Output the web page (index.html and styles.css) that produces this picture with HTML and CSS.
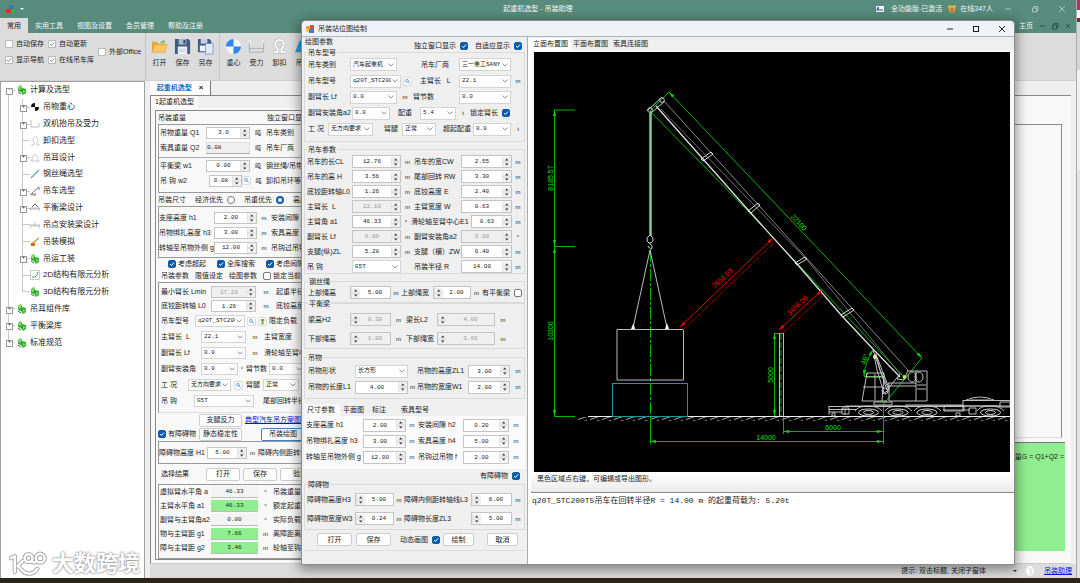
FILE: index.html
```html
<!DOCTYPE html>
<html lang="zh-CN">
<head>
<meta charset="utf-8">
<title>起重机选型 - 吊装助理</title>
<link rel="stylesheet" href="styles.css">
</head>
<body>
<svg class="defs" width="0" height="0" aria-hidden="true">
  <symbol id="leaf" viewBox="0 0 10 10"><path d="M1 2L4 0L5 3L9 4L9 8L6 10L4 7L1 6Z" fill="#2fae2f"/><path d="M1 2L4 1L4 4L2 5Z" fill="#7fe06a"/><path d="M6 5L9 6L6 9Z" fill="#5fe04e"/><path d="M1 7L4 9" stroke="#555"/></symbol>
  <symbol id="search" viewBox="0 0 8 8"><circle cx="3.4" cy="3.2" r="1.7" fill="#dcebff" stroke="#5b8fdc" stroke-width=".8"/><path d="M4.6 4.6L6.6 6.4" stroke="#5b8fdc"/></symbol>
</svg>
<div class="screen">
  <div class="app">
    <header class="titlebar">
      <svg class="logo" viewBox="0 0 10 10"><rect x="3" y="1" width="4" height="4" fill="#3d6fd0"/><rect x="0" y="5" width="5" height="4" fill="#d8322c"/><rect x="5" y="5" width="4" height="4" fill="#35b03c"/></svg>
      <svg class="caret" viewBox="0 0 4 4"><path d="M0 1H4L2 3Z" fill="#fff"/></svg>
      <h1>起重机选型 - 吊装助理</h1>
      <div class="account">
        <svg class="ico8" viewBox="0 0 8 8"><rect y="1" width="8" height="6" fill="#f3f6ff"/><path d="M1 6V4H3V6M4 5H7" stroke="#2d4f9c" fill="none"/><circle cx="2" cy="3" r="1" fill="#2d4f9c"/></svg>
        <span class="lic">全功能版-已激活</span>
        <svg class="ico8" viewBox="0 0 8 8"><circle cx="4" cy="4" r="3.4" fill="#e5a13b"/><circle cx="1.5" cy="1.5" r="1.3" fill="#d8ce4c"/><circle cx="6.5" cy="1.5" r="1.3" fill="#d8ce4c"/><path d="M2.5 5.5H5.5M3 3V4M5 3V4" stroke="#8a2c18" stroke-width=".8"/></svg>
        <span>在线347人</span>
      </div>
      <div class="winbtns">
        <button aria-label="最小化"><svg viewBox="0 0 8 8"><path d="M1 4H7"/></svg></button>
        <button aria-label="还原"><svg viewBox="0 0 8 8"><path d="M1.5 3H5.5V7H1.5ZM3 3V1.500H7V5.500H5.500"/></svg></button>
        <button aria-label="关闭"><svg viewBox="0 0 8 8"><path d="M1 1L7 7M7 1L1 7"/></svg></button>
      </div>
    </header>
    <nav class="menu">
      <button class="on">常用</button><button>实用工具</button><button>视图及设置</button><button>会员管理</button><button>帮助及注册</button>
      <div class="mdi"><span>主页</span>
        <svg viewBox="0 0 8 8"><path d="M2 4H7"/></svg><svg viewBox="0 0 8 8"><path d="M1.500 3H5.500V7H1.500ZM3 3V1.500H7V5.500H5.500"/></svg><svg viewBox="0 0 8 8"><path d="M2 2L6 6M6 2L2 6"/></svg></div>
    </nav>
    <section class="ribbon">
      <div class="opts">
        <label><input type="checkbox" class="sq">自动保存</label><label><input type="checkbox" class="sq" checked>自动更新</label>
        <label class="tall"><input type="checkbox" class="sq">外部Office</label>
        <label><input type="checkbox" class="sq" checked>显示导航</label><label><input type="checkbox" class="sq" checked>在线吊车库</label>
      </div>
      <div class="tools sep">
        <button><svg viewBox="0 0 18 18"><path d="M1 15V4H6L8 6H15V9" fill="#e9a63a"/><path d="M9 5L13 2L15 3L14 6" fill="#8bc06a"/><path d="M1 15L4 7H17L15 15Z" fill="#fbc864" stroke="#d99a34" stroke-width=".6"/></svg>打开</button>
        <button><svg viewBox="0 0 18 18"><path d="M1 1H15L17 3V17H1Z" fill="#44597e"/><rect x="5" y="1" width="8" height="6" fill="#a9b9d2"/><rect x="10" y="2" width="2" height="4" fill="#32425f"/><rect x="4" y="9" width="10" height="8" fill="#eef2f7"/><path d="M5 12H13M5 14H13" stroke="#9aa9be" stroke-width=".6"/></svg>保存</button>
        <button><svg viewBox="0 0 18 18"><path d="M1 1H13L15 3V15H1Z" fill="#44597e"/><rect x="4" y="1" width="7" height="5" fill="#c4d0e2"/><rect x="3" y="8" width="8" height="6" fill="#eef2f7"/><rect x="9" y="6" width="8" height="11" fill="#dfe8f4" stroke="#6b86b3" stroke-width=".7"/></svg>另存</button>
      </div>
      <div class="tools sep">
        <button><svg viewBox="0 0 18 18"><circle cx="9" cy="9" r="8" fill="#f4f7fb"/><path d="M9 9V17A8 8 0 0 0 17 9ZM9 9V1A8 8 0 0 0 1 9Z" fill="#2f86e8"/></svg>重心</button>
        <button><svg viewBox="0 0 18 18"><path d="M2 2V9M16 2V9" stroke="#fff"/><path d="M1.500 5V15H16.500V5M1 11H17" fill="none" stroke="#a5adb3"/></svg>受力</button>
        <button><svg viewBox="0 0 18 18"><path d="M3 15H7V11C3 8 4 2 9 2S15 8 11 11V15H15" fill="none" stroke="#a9adb0" stroke-width="3"/><path d="M3 15H7V11C3 8 4 2 9 2S15 8 11 11V15H15" fill="none" stroke="#fff" stroke-width="2"/></svg>卸扣</button>
        <button><svg viewBox="0 0 18 18"><path d="M1 15L6 3H13L17 15Z" fill="#2a9fe0"/><circle cx="10" cy="7" r="2.500" fill="#fff"/></svg>吊耳</button>
      </div>
    </section>
    <div class="work">
      <aside class="nav">
        <ul class="tree">
          <li class="t1 open"><svg class="ti"><use href="#leaf"/></svg>计算及选型</li>
          <li class="t2 plus"><svg class="ti" viewBox="0 0 10 10"><circle cx="5" cy="5" r="4.200" fill="#fff" stroke="#ddd" stroke-width=".4"/><path d="M5 5V1A4 4 0 0 0 1 5ZM5 5V9A4 4 0 0 0 9 5Z" fill="#111"/></svg>吊物重心</li>
          <li class="t2 plus"><svg class="ti" viewBox="0 0 10 10"><path d="M1 1V8H9V4" fill="none" stroke="#aaa" stroke-width=".8"/></svg>双机抬吊及受力</li>
          <li class="t2"><svg class="ti" viewBox="0 0 10 10"><path d="M1 9H4V6C2 4 3 1 5.500 1S9 4 7 6V9H10" fill="none" stroke="#bbb" stroke-width=".8"/></svg>卸扣选型</li>
          <li class="t2 plus"><svg class="ti" viewBox="0 0 10 10"><path d="M0 8H10M2 8C2 4 3 2 5 2S8 4 8 8" fill="none" stroke="#bbb" stroke-width=".8"/></svg>吊耳设计</li>
          <li class="t2"><svg class="ti" viewBox="0 0 10 10"><path d="M1 9L9 1" stroke="#6fae9d" stroke-width="1.400"/></svg>钢丝绳选型</li>
          <li class="t2 plus"><svg class="ti" viewBox="0 0 10 10"><path d="M0 8H6M2 7L9 1L9 4" fill="none" stroke="#777"/><path d="M1 9H6" stroke="#b55" stroke-width=".8"/></svg>吊车选型</li>
          <li class="t2 plus"><svg class="ti" viewBox="0 0 10 10"><path d="M2 4L5 1L8 4" fill="none" stroke="#333" stroke-width=".8"/><path d="M0 8V5H10V8M0 6H10" fill="none" stroke="#99a" stroke-width=".7"/></svg>平衡梁设计</li>
          <li class="t2"><svg class="ti" viewBox="0 0 10 10"><path d="M0 9V5H10V9M5 5V2M0 6H10" fill="none" stroke="#aaa" stroke-width=".7"/></svg>吊点安装梁设计</li>
          <li class="t2"><svg class="ti" viewBox="0 0 10 10"><path d="M1 8L4 5L9 1" fill="none" stroke="#e0962e" stroke-width="1.500"/><path d="M1 6H5V9H1Z" fill="#cf6f1e"/></svg>吊装模拟</li>
          <li class="t2 plus"><svg class="ti"><use href="#leaf"/></svg>吊运工装</li>
          <li class="t2"><svg class="ti" viewBox="0 0 10 10"><rect x=".5" y=".5" width="9" height="9" fill="#fff" stroke="#aaa" stroke-width=".6"/><path d="M2 7C5 8 7 6 8 2" fill="none" stroke="#3c9c4b"/></svg>2D结构有限元分析</li>
          <li class="t2 last"><svg class="ti"><use href="#leaf"/></svg>3D结构有限元分析</li>
          <li class="t1 plus"><svg class="ti"><use href="#leaf"/></svg>吊耳组件库</li>
          <li class="t1 plus"><svg class="ti"><use href="#leaf"/></svg>平衡梁库</li>
          <li class="t1 plus last"><svg class="ti"><use href="#leaf"/></svg>标准规范</li>
        </ul>
        <div class="mark">
          <svg viewBox="0 0 40 26"><g id="sign" fill="none" stroke="#a8a8a8" stroke-width="4.500" stroke-linecap="round" stroke-linejoin="round"><path d="M2 7L6 5V21M14 10L9 15L14 20C19 25 26 23 29 18"/><circle cx="20" cy="7" r="4"/><circle cx="32" cy="7" r="4.500"/><path d="M23 10Q26 13 28 10"/></g><g fill="none" stroke="#fff" stroke-width="2.500" stroke-linecap="round" stroke-linejoin="round"><path d="M2 7L6 5V21M14 10L9 15L14 20C19 25 26 23 29 18"/><circle cx="20" cy="7" r="4"/><circle cx="32" cy="7" r="4.500"/><path d="M23 10Q26 13 28 10"/></g></svg>
          <span>大数跨境</span>
        </div>
      </aside>
      <main class="doc">
        <div class="doctabs"><button>起重机选型 <b>×</b></button></div>
        <div class="page">
          <div class="side">
            <div class="subtab"><span>1起重机选型</span></div>
            <div class="frame">
              <div class="head"><span>吊装重量</span><span class="own">独立窗口显示</span></div>
              <div class="box wt">
                <div class="r ra"><label for="q1">吊物重量 Q1</label><input id="q1" class="num" value="3.0"><i>吨</i><span>吊车类别</span></div>
                <div class="r ra"><label for="q2">索具重量 Q2</label><input id="q2" class="flat" value="0.08" readonly><i>吨</i><span>吊车厂商</span></div>
                <div class="r ra line"><label for="w1">平衡梁 w1</label><input id="w1" class="num" value="0.00"><i>吨</i><span>钢丝绳/吊带</span></div>
                <div class="r rb"><label for="w2">吊 钩 w2</label><input id="w2" class="num" value="0.08"><button class="mini" aria-label="查询"><svg><use href="#search"/></svg></button><i>吨</i><span>卸扣吊环等</span></div>
              </div>
              <div class="head radios"><span>吊装尺寸</span><label>经济优先 <input type="radio" name="pri"></label><label>吊重优先 <input type="radio" name="pri" checked></label><span>高度优先</span></div>
              <div class="box dims">
                <div class="r rc"><label for="h1">支座高度 h1</label><input id="h1" class="num" value="2.00"><i>m</i><span>安装间隙</span></div>
                <div class="r rc"><label for="h3">吊物绑扎高度 h3</label><input id="h3" class="num" value="3.00"><i>m</i><span>索具高度</span></div>
                <div class="r rc"><label for="g">转轴至吊物外侧 g</label><input id="g" class="num" value="12.00"><i>m</i><span>吊钩过吊物</span></div>
              </div>
              <div class="checks"><label><input type="checkbox" checked>考虑超起</label><label><input type="checkbox" checked>全库搜索</label><label><input type="checkbox" checked>考虑间隙</label></div>
              <div class="ptabs"><button class="on">吊装参数</button><button>限值设定</button><button>绘图参数</button><label><input type="checkbox">锁定当前</label></div>
              <div class="box prm">
                <div class="r rd low"><label for="lm">最小臂长 Lmin</label><input id="lm" class="num" value="17.28" disabled><i>m</i><span>起重半径</span></div>
                <div class="r rd low"><label for="l0">底铰距转轴 L0</label><input id="l0" class="num" value="1.26"><i>m</i><span>底铰高度</span></div>
                <div class="r re"><label for="md">吊车型号</label><select id="md"><option>q20T_STC200T5</option></select><button class="mini" aria-label="查询型号"><svg><use href="#search"/></svg></button><button class="mini" aria-label="型号图"><svg viewBox="0 0 8 8"><path d="M2 1H6V4H5V6H6V7H2V6H3V4H2Z" fill="#7cb342"/></svg></button><span>限定负载</span></div>
                <div class="r rf"><label for="ml">主臂长&nbsp; L</label><select id="ml"><option>22.1</option></select><i>m</i><span>主臂宽度</span></div>
                <div class="r rf"><label for="fl">副臂长 Lf</label><select id="fl"><option>0.0</option></select><i>m</i><span>滑轮轴至臂中</span></div>
                <div class="r rg"><label for="fa">副臂安装角</label><select id="fa"><option>0.0</option></select><i>°</i><label for="js">臂节数</label><select id="js"><option>0.0</option></select></div>
                <div class="r rh"><label for="gk">工 况</label><select id="gk"><option>无方向要求</option></select><button class="mini" aria-label="查询工况"><svg><use href="#search"/></svg></button><label for="bt">臂腿</label><select id="bt"><option>正常</option></select></div>
                <div class="r ri"><label for="dg">吊 钩</label><select id="dg"><option>G5T</option></select><span>尾部回转半径</span></div>
              </div>
              <div class="acts"><span></span><button class="btn">支腿反力</button><a href="#plan">典型汽车吊方案图</a></div>
              <div class="acts"><label><input type="checkbox" checked>有障碍物</label><button class="btn">静态稳定性</button><button class="btn focus">吊装绘图</button></div>
              <div class="box obs"><div class="r rj"><label for="oh">障碍物高度 H1</label><input id="oh" class="num" value="5.00"><i>m</i><span>障碍内侧距转轴</span></div></div>
              <div class="acts res"><span>选择结果</span><button class="btn">打开</button><button class="btn">保存</button><button class="btn">验算</button></div>
              <div class="box out">
                <div class="r rk"><span>虚拟臂水平角 a</span><output>46.33</output><i>°</i><span>吊装重量</span></div>
                <div class="r rk"><span>主臂水平角 a1</span><output class="ok">46.33</output><i>°</i><span>额定起重</span></div>
                <div class="r rk"><span>副臂与主臂角a2</span><output>0.00</output><i>°</i><span>实际负载率</span></div>
                <div class="r rk"><span>物与主臂距 g1</span><output class="ok">7.66</output><i>m</i><span>离障距离</span></div>
                <div class="r rk"><span>障与主臂距 g2</span><output class="ok">3.46</output><i>m</i><span>轮轴至钩</span></div>
              </div>
            </div>
          </div>
          <div class="results"><div class="empty"></div><div class="calc">吊装重量G = Q1+Q2 =</div></div>
        </div>
        <footer class="status"><span>提示: 双击标题, 关闭子窗体</span><svg class="caret" viewBox="0 0 4 4"><path d="M0 1H4L2 3Z" fill="#222"/></svg><svg class="bulb" viewBox="0 0 10 10"><ellipse cx="5" cy="5" rx="4" ry="5" fill="#fafafa"/><path d="M5 2Q8 5 5 9" fill="none" stroke="#ccc"/></svg><a href="#help">吊装助理</a></footer>
      </main>
    </div>
  </div>
  <div class="sliver"></div>
  <div class="taskbar"></div>

  <section class="dialog" role="dialog" aria-label="吊装站位图绘制">
    <header class="dlgbar"><svg class="ico8" viewBox="0 0 8 8"><rect x="0" y="1" width="5" height="4" fill="#e9a23b"/><rect x="4" y="0" width="4" height="4" fill="#d9533a"/><rect x="3" y="4" width="5" height="4" fill="#4a78d0"/><rect x="0" y="4" width="3" height="3" fill="#f1cc50"/></svg><h2>吊装站位图绘制</h2>
      <div class="winbtns dark">
        <button aria-label="最小化"><svg viewBox="0 0 8 8"><path d="M1 4H7"/></svg></button><button aria-label="最大化"><svg viewBox="0 0 8 8"><rect x="1.500" y="1.500" width="5" height="5"/></svg></button><button aria-label="关闭"><svg viewBox="0 0 8 8"><path d="M1 1L7 7M7 1L1 7"/></svg></button>
      </div>
    </header>
    <div class="dlgbody">
      <form class="params">
        <div class="top"><span>绘图参数</span><label>独立窗口显示 <input type="checkbox" checked></label><label>自适应显示 <input type="checkbox" checked></label></div>
        <fieldset class="g1"><legend>吊车型号</legend>
          <div class="r da"><label for="a1">吊车类别</label><select id="a1"><option>汽车起重机</option></select><label for="a2">吊车厂商</label><select id="a2"><option>三一重工SANY</option></select></div>
          <div class="r db"><label for="a3">吊车型号</label><select id="a3"><option>q20T_STC200T5</option></select><button type="button" class="mini" aria-label="查询"><svg><use href="#search"/></svg></button><label for="a4">主臂长&nbsp;&nbsp; L</label><select id="a4"><option>22.1</option></select><i>m</i></div>
          <div class="r dc"><label for="a5">副臂长 Lf</label><select id="a5"><option>0.0</option></select><i>m</i><label for="a6">臂节数</label><select id="a6"><option>0.0</option></select></div>
          <div class="r dd"><label for="a7">副臂安装角a2</label><select id="a7"><option>0.0</option></select><label for="a8">配重</label><select id="a8"><option>5.4</option></select><i>t</i><label>锁定臂长 <input type="checkbox" checked></label></div>
          <div class="r de"><label for="a9">工 况</label><select id="a9"><option>无方向要求</option></select><label for="a10">臂腿</label><select id="a10"><option>正常</option></select><label for="a11">超起配重</label><select id="a11"><option>0.0</option></select><i>t</i></div>
        </fieldset>
        <fieldset class="g2"><legend>吊车参数</legend>
          <div class="r df"><label for="b1">吊车的长CL</label><input id="b1" class="num" value="12.76"><i>m</i><label for="b2">吊车的宽CW</label><input id="b2" class="num" value="2.55"><i>m</i></div>
          <div class="r df"><label for="b3">吊车的高 H</label><input id="b3" class="num" value="3.56"><i>m</i><label for="b4">尾部回转 RW</label><input id="b4" class="num" value="3.30"><i>m</i></div>
          <div class="r df"><label for="b5">底铰距转轴L0</label><input id="b5" class="num" value="1.26"><i>m</i><label for="b6">底铰高度 E</label><input id="b6" class="num" value="2.40"><i>m</i></div>
          <div class="r df"><label for="b7">主臂长&nbsp; L</label><input id="b7" class="num" value="22.10" disabled><i>m</i><label for="b8">主臂宽度 W</label><input id="b8" class="num" value="0.63"><i>m</i></div>
          <div class="r df e1"><label for="b9">主臂角 a1</label><input id="b9" class="num" value="46.33"><i>°</i><label for="b10">滑轮轴至臂中心E1</label><input id="b10" class="num" value="0.63"><i>m</i></div>
          <div class="r df"><label for="b11">副臂长 Lf</label><input id="b11" class="num" value="0.00" disabled><i>m</i><label for="b12">副臂安装角a2</label><input id="b12" class="num" value="0.00" disabled><i>°</i></div>
          <div class="r df"><label for="b13">支腿(纵)ZL</label><input id="b13" class="num" value="5.28"><i>m</i><label for="b14">支腿（横）ZW</label><input id="b14" class="num" value="6.40"><i>m</i></div>
          <div class="r df"><label for="b15">吊 钩</label><select id="b15"><option>G5T</option></select><i></i><label for="b16">吊装半径 R</label><input id="b16" class="num" value="14.00"><i>m</i></div>
        </fieldset>
        <fieldset class="g3"><legend>钢丝绳</legend>
          <div class="r dg"><label for="c1">上部绳高</label><input id="c1" class="num left" value="5.00"><i>m</i><label for="c2">上部绳宽</label><input id="c2" class="num left" value="2.00"><i>m</i><label>有平衡梁 <input type="checkbox"></label></div>
        </fieldset>
        <fieldset class="g4"><legend>平衡梁</legend>
          <div class="r dh"><label for="c3">梁高H2</label><input id="c3" class="num left" value="0.30" disabled><i>m</i><label for="c4">梁长L2</label><input id="c4" class="num left" value="4.00" disabled><i>m</i></div>
          <div class="r dh"><label for="c5">下部绳高</label><input id="c5" class="num left" value="1.00" disabled><i>m</i><label for="c6">下部绳宽</label><input id="c6" class="num left" value="3.60" disabled><i>m</i></div>
        </fieldset>
        <fieldset class="g5"><legend>吊物</legend>
          <div class="r di"><label for="d1">吊物形状</label><select id="d1"><option>长方形</option></select><i></i><label for="d2">吊物的高度ZL1</label><input id="d2" class="num" value="3.00"><i>m</i></div>
          <div class="r di"><label for="d3">吊物的长度L1</label><input id="d3" class="num" value="4.00"><i>m</i><label for="d4">吊物的宽度W1</label><input id="d4" class="num" value="2.00"><i>m</i></div>
        </fieldset>
        <div class="dtabs"><button type="button" class="on">尺寸参数</button><button type="button">平面图</button><button type="button">标注</button><button type="button">索具型号</button></div>
        <div class="dpane">
          <div class="r dj"><label for="e1">支座高度 h1</label><input id="e1" class="num" value="2.00"><i>m</i><label for="e2">安装间隙 h2</label><input id="e2" class="num" value="0.20"><i>m</i></div>
          <div class="r dj"><label for="e3">吊物绑扎高度 h3</label><input id="e3" class="num" value="3.00"><i>m</i><label for="e4">索具高度 h4</label><input id="e4" class="num" value="5.00"><i>m</i></div>
          <div class="r dj"><label for="e5">转轴至吊物外侧 g</label><input id="e5" class="num" value="12.00"><i>m</i><label for="e6">吊钩过吊物 f</label><input id="e6" class="num" value="2.00"><i>m</i></div>
        </div>
        <div class="has"><label>有障碍物 <input type="checkbox" checked></label></div>
        <fieldset class="g6"><legend>障碍物</legend>
          <div class="r dk"><label for="f1">障碍物高度H3</label><input id="f1" class="num left" value="5.00"><i>m</i><label for="f2">障碍内侧距转轴线L3</label><input id="f2" class="num left" value="6.00"><i>m</i></div>
          <div class="r dk"><label for="f3">障碍物宽度W3</label><input id="f3" class="num left" value="0.24"><i>m</i><label for="f4">障碍物长度ZL3</label><input id="f4" class="num left" value="5.00"><i>m</i></div>
        </fieldset>
        <div class="foot"><button type="button" class="btn">打开</button><button type="button" class="btn">保存</button><label>动态画图 <input type="checkbox" checked></label><button type="button" class="btn">绘制</button><button type="button" class="btn">取消</button></div>
      </form>
      <div class="view">
        <div class="vtabs"><button class="on">立面布置图</button><button>平面布置图</button><button>索具连接图</button></div>
        <svg class="cad" viewBox="534 52 476 420" preserveAspectRatio="xMidYMid slice">
          <defs>
            <marker id="ga" viewBox="0 0 6 4" refX="6" refY="2" markerWidth="6" markerHeight="4" orient="auto-start-reverse" markerUnits="userSpaceOnUse"><path d="M0 .5L6 2L0 3.500Z" fill="#00e000"/></marker>
            <marker id="rd" viewBox="0 0 6 4" refX="6" refY="2" markerWidth="6" markerHeight="4" orient="auto-start-reverse" markerUnits="userSpaceOnUse"><path d="M0 .5L6 2L0 3.500Z" fill="#f00"/></marker>
            <pattern id="hatch" x="578" y="416" width="12" height="4" patternUnits="userSpaceOnUse"><path d="M0 3.500L9 .5" stroke="#bbb" stroke-width=".9"/></pattern>
          </defs>
          <rect x="534" y="52" width="476" height="420" fill="#000"/>
          <path d="M588 416.500H1010" stroke="#eee"/><rect x="578" y="417" width="432" height="4" fill="url(#hatch)"/>
          <g fill="none" stroke="#00c800" stroke-width=".9">
            <path d="M554.500 110V246" marker-start="url(#ga)" marker-end="url(#ga)"/><path d="M554.500 247V416" marker-start="url(#ga)" marker-end="url(#ga)"/><path d="M774.500 333V416" marker-start="url(#ga)" marker-end="url(#ga)"/><path d="M783 431.500H883" marker-start="url(#ga)" marker-end="url(#ga)"/><path d="M650 441.500H883" marker-start="url(#ga)" marker-end="url(#ga)"/><path d="M669 92L922 358" marker-start="url(#ga)" marker-end="url(#ga)"/>
            <path d="M554 110H575M554 246.500H575M554 416.500H575M774 333.500H783M650.500 417V444M783.500 417V434M883.500 405V444M883 405L922 358M650 111L669 92"/>
            <path d="M650 111L748 211L904 377"/>
            <path d="M650.500 250V416" stroke-dasharray="12 2 3 2"/><path d="M781 334V416" stroke-dasharray="6 2"/>
            <path d="M864 376Q865 362 873 350" marker-start="url(#ga)" marker-end="url(#ga)"/><path d="M864 376.500H884"/>
          </g>
          <g fill="none" stroke="#d0d0d0" stroke-width=".9">
            <path d="M617 329.500H683.500V380H617ZM650 250L633 328M650 250L667 328"/>
            <path d="M650 235Q646 237 647 241L649 243H651L653 241Q654 237 650 235M649 243Q653 245 652 248T648 246M647 111L662 97M651 113L665 101" stroke="#eee"/>
            <circle cx="650" cy="110" r="2.300"/><circle cx="662" cy="100" r="2.300"/>
            <path d="M664 101L908 370" stroke="#999"/><path d="M661 109L807 260L900 374" stroke="#777"/><path d="M656 106L703 159L749 211L797 264L842 316L873 349L900 377" stroke="#ddd" stroke-width="1.300"/>
            <path d="M701 159L711 152L713 154L703 161ZM748 211L758 203L760 205L751 213ZM795 263L805 257L807 259L797 265ZM841 315L852 308L854 310L843 317Z" stroke="#eee"/>
            <path d="M779.500 333V416M783.500 333V416"/>
            <path d="M867 373H884V377H866ZM867 373L862 401H887M863 387H884M875 374V400M884 377L882 401M873 350L887 390M877 357L889 388M887 390L900 374M888 383H916M888 386H916M889 383V401H927V371H908M916 371V401M917 385H926M917 389H926M874 402H892V405H874ZM908 370L904 380L897 379L900 374"/>
            <path d="M874 355L877 370L884 393L889 390L880 370L876 354Z"/><circle cx="885" cy="391" r="3"/>
            <ellipse cx="912" cy="377" rx="4" ry="5"/><ellipse cx="919" cy="377" rx="4" ry="5"/>
            <path d="M829 406.500H963M829 406V415M829 409.500H857M905 405H963M943 410H970M829 412H842M963 400V410M963 400.500H1010M1000 402H1010V407H1000ZM963 406H1000M966 400Q980 394 994 400M970 400H990"/>
            <path d="M842 408H849V414H842ZM845 409V415M845 406H1010M832 413H835V416H832ZM944 406H964V411H944ZM956 413H960V416H956ZM969 408H976V414H969Z"/>
            <path d="M855 411Q858 406 868 406T882 411M885 411Q888 406 898 406T912 411M914 411Q917 406 927 406T941 411M977 411Q980 406 990 406T1004 411"/>
            <g stroke="#eee"><ellipse cx="868.500" cy="412.500" rx="10" ry="3.500"/><ellipse cx="868.500" cy="412.500" rx="5" ry="2"/><ellipse cx="898" cy="412.500" rx="10" ry="3.500"/><ellipse cx="898" cy="412.500" rx="5" ry="2"/><ellipse cx="927" cy="412.500" rx="10" ry="3.500"/><ellipse cx="927" cy="412.500" rx="5" ry="2"/><ellipse cx="990.500" cy="412.500" rx="10" ry="3.500"/><ellipse cx="990.500" cy="412.500" rx="5" ry="2"/></g>
          </g>
          <path d="M650.500 112V236" stroke="#8fc79a" stroke-width="2.500"/>
          <path d="M631 329L633.500 323L635 329ZM665 329L667 323L669 329Z" fill="#fff"/>
          <circle cx="875" cy="357" r="2" fill="#f3e6b0"/><circle cx="904.500" cy="377" r="2" fill="#b8e05a"/>
          <rect x="612.500" y="383.500" width="75" height="33" fill="none" stroke="#1f9a9a"/>
          <g fill="none" stroke="#f00" stroke-width=".9"><path d="M680 327L773 238" marker-start="url(#rd)" marker-end="url(#rd)"/><path d="M779 330L822 290" marker-start="url(#rd)" marker-end="url(#rd)"/><path d="M683 330L776 241M783 333L824 295" stroke-dasharray="5 1.500 2 1.500" stroke="#b00"/></g>
          <g class="dimtext" fill="#00e000">
            <text transform="translate(553 178) rotate(-90)">8185.57</text><text transform="translate(553 331) rotate(-90)">10200</text><text transform="translate(773 375) rotate(-90)">5000</text>
            <text x="766" y="440">14000</text><text x="833" y="430">6000</text><text transform="translate(797 224) rotate(47)">22100</text><text transform="translate(867 360) rotate(-72)">46°</text>
            <text fill="#f00" transform="translate(724 280) rotate(-43)">7658.03</text><text fill="#f00" transform="translate(799 307) rotate(-43)">3456.06</text>
          </g>
        </svg>
        <p class="hint">黑色区域点右键，可编辑或导出图形。</p>
        <textarea class="log" aria-label="计算结果">q20T_STC200T5吊车在回转半径R = 14.00 m 的起重荷载为: 5.20t</textarea>
      </div>
    </div>
  </section>
</div>
</body>
</html>
```
FILE: styles.css
```css
* { box-sizing: border-box; }
body { margin: 0; font: 7px/10px "Liberation Sans", "Noto Sans CJK SC", sans-serif; color: #222; background: #2b2519; }
h1, h2, p, ul, fieldset { margin: 0; padding: 0; border: 0; font: inherit; }
.defs { position: absolute; }
button, input, select, textarea { font: inherit; color: inherit; margin: 0; padding: 0; border: 0; border-radius: 0; background: none; }
i { font-style: normal; }
label, span, button, legend { white-space: nowrap; }
.screen { position: relative; display: grid; grid-template: 1fr 5px / 1fr 4px; height: 100vh; overflow: hidden; }
.app { display: flex; flex-direction: column; min-height: 0; min-width: 0; background: #efefef; }
.taskbar { grid-column: 1 / -1; background: #2b2519; }
.sliver { border-left: 1px solid #aaa; background: linear-gradient(#a8365e 0 10px, #fff 10px 18px, #7a2c40 18px 22px, #d5d5d5 22px 70px, #f0f0f0 70px 170px, #e4e4e4 170px); }
.caret { width: 4px; height: 4px; }
.ico8 { width: 8px; height: 8px; }

.titlebar { position: relative; display: flex; align-items: center; height: 18px; background: #578b7b; color: #f4f8f6; padding: 0 10px 0 6px; }
.logo { width: 10px; height: 10px; margin-right: 4px; }
.titlebar h1 { flex: 1; text-align: center; padding-left: 176px; }
.account { display: flex; align-items: center; gap: 4px; }
.lic { margin: 0 2px 0 3px; }
.winbtns { display: flex; gap: 20px; margin-left: 11px; }
.titlebar .winbtns { gap: 19px; }
.winbtns button { width: 8px; height: 8px; display: block; }
.winbtns svg, .mdi svg { display: block; width: 8px; height: 8px; fill: none; stroke: #a9c4bb; stroke-width: 1; }
.winbtns.dark svg { stroke: #222; }
.menu { display: flex; height: 15px; background: #578b7b; color: #f4f8f6; }
.menu button { padding: 0 7px; }
.menu .on { background: #dcdcdc; color: #222; }
.mdi { margin-left: auto; display: flex; align-items: center; gap: 5px; padding-right: 4px; }
.mdi svg { stroke: #2a5548; }

.ribbon { display: flex; height: 48px; background: #dcdcdc; border-bottom: 1px solid #cfcfcf; }
.opts { display: grid; grid-template-columns: 43px 50px 43px; grid-template-rows: 16px 16px; padding: 3px 4px 0 5px; align-items: center; width: 145px; }
.opts label { display: flex; align-items: center; gap: 3px; }
.opts .tall { grid-column: 3; grid-row: 1 / 3; }
.tools { display: flex; padding: 5px 2px; }
.tools.sep { border-left: 1px solid #c6c6c6; }
.tools button { width: 23px; display: flex; flex-direction: column; align-items: center; gap: 3px; }
.tools svg { width: 17px; height: 17px; }

input[type=checkbox], input[type=radio] { appearance: none; width: 8px; height: 8px; border: 1px solid #777; border-radius: 2px; background: #fff center / 6px no-repeat; flex: none; }
input[type=checkbox]:checked { border-color: #0b5cad; background-color: #0b5cad; background-image: url("data:image/svg+xml,%3Csvg xmlns='http://www.w3.org/2000/svg' viewBox='0 0 6 6'%3E%3Cpath d='M1 3L2.500 4.500L5 1.500' fill='none' stroke='%23fff'/%3E%3C/svg%3E"); }
input.sq, input.sq:checked { border: 1px solid #bbb; border-radius: 0; background-color: #fff; }
input.sq:checked { background-image: url("data:image/svg+xml,%3Csvg xmlns='http://www.w3.org/2000/svg' viewBox='0 0 6 6'%3E%3Cpath d='M1 3L2.500 4.500L5 1.500' fill='none' stroke='%23666' stroke-width='.8'/%3E%3C/svg%3E"); }
input[type=radio] { border-radius: 50%; }
input[type=radio]:checked { border: 2px solid #0b5cad; }

.num, .flat, select { display: block; min-width: 0; width: 100%; height: 12px; border: 1px solid #c4c4c4; background-color: #fff; font: 6px/8px "Liberation Mono", "Noto Sans CJK SC", monospace; }
.num { text-align: center; padding-right: 9px; background-image: url("data:image/svg+xml,%3Csvg xmlns='http://www.w3.org/2000/svg' viewBox='0 0 9 10'%3E%3Cpath d='M0 0H9V10H0Z' fill='%23f0f0f0'/%3E%3Cpath d='M0 0V10M0 5H9' stroke='%23ccc' stroke-width='.6'/%3E%3Cpath d='M3 3.500H6.500L4.750 1.500ZM3 6.500H6.500L4.750 8.500Z' fill='%23333'/%3E%3C/svg%3E"); background-size: 9px 10px; background-repeat: no-repeat; background-position: right center; }
.num.left { padding: 0 0 0 9px; background-position: left center; }
.num:disabled { color: #999; background-color: #efefef; }
.flat { background: #efefef; border-color: #ddd #ddd #aaa; }
select { appearance: none; padding: 0 9px 0 2px; border-color: #d4d4d4; background-repeat: no-repeat; background-position: right 2px center; background-size: 6px 4px; background-image: url("data:image/svg+xml,%3Csvg xmlns='http://www.w3.org/2000/svg' viewBox='0 0 6 4'%3E%3Cpath d='M.5 .5L3 3L5.500 .5' fill='none' stroke='%23666' stroke-width='.7'/%3E%3C/svg%3E"); }
.r { display: grid; align-items: center; height: 15px; }
.r i { font-size: 6px; text-align: center; }
.mini { width: 9px; height: 9px; border: 1px solid #ddd; background: #fafcff; border-radius: 2px; }
.mini svg { display: block; width: 7px; height: 7px; }
.btn { height: 13px; border: 1px solid #ccc; border-radius: 2px; background: #fdfdfd; }
.btn.focus { border-color: #3d83c6; }

.work { flex: 1; display: flex; min-height: 0; }
.nav { position: relative; width: 145px; background: #fff; border: 1px solid #a0a0a0; border-bottom: 0; flex: none; }
.tree { list-style: none; display: grid; grid-auto-rows: 1fr; height: 269px; font-size: 8px; background: linear-gradient(#c8c8c8, #c8c8c8) 7px 8px / 1px 250px no-repeat; }
.tree li { position: relative; display: flex; align-items: center; gap: 3px; padding-left: 16px; }
.tree .t2 { padding-left: 29px; }
.tree li::before { content: ""; position: absolute; left: 7px; top: 0; bottom: 0; width: 7px; background: linear-gradient(#c8c8c8, #c8c8c8) center / 100% 1px no-repeat; }
.tree .t2::before { left: 21px; border-left: 1px solid #c8c8c8; }
.tree .t2.last::before { bottom: 50%; background-position: bottom; }
.tree .plus::after, .tree .open::after { content: "+"; position: absolute; left: 5px; top: 6px; width: 5px; height: 5px; border: 1px solid #999; background: #fff; font: 5px/3px "Liberation Mono", monospace; text-align: center; }
.tree .open::after { content: "-"; }
.tree .t2::after { left: 19px; }
.ti { width: 10px; height: 10px; flex: none; }
.mark { position: absolute; left: 8px; bottom: 1px; display: flex; align-items: center; gap: 4px; font-size: 22px; line-height: 26px; font-weight: 700; color: #fff; text-shadow: 0 0 2px #888, 0 0 3px #aaa; }
.mark svg { width: 39px; height: 26px; }

.doc { flex: 1; min-width: 0; display: flex; flex-direction: column; padding-left: 5px; }
.doctabs { height: 14px; }
.doctabs button { height: 14px; width: 61px; background: #fff; border-right: 1px solid #777; color: #0870c9; font-weight: 700; }
.doctabs b { color: #222; margin-left: 5px; font-size: 8px; }
.page { flex: 1; min-height: 0; display: flex; margin-right: 5px; border: 1px solid #888; border-right: 0; border-bottom-color: #ccc; background: #f8f8f8; }
.side { width: 340px; flex: none; overflow: hidden; }
.subtab { height: 12px; background: #efefef; }
.subtab span { display: inline-block; padding: 1px 4px; background: #fafafa; }
.frame { border: 1px solid #888; margin: 2px 0 0 4px; padding-left: 2px; }
.head { display: flex; align-items: center; height: 13px; }
.own { margin-left: 81px; }
.radios { gap: 9px; }
.radios label { display: flex; align-items: center; gap: 4px; }
.box { border: 1px solid #999; }
.wt { height: 69px; }
.ra { grid-template-columns: 46px 44px 16px 1fr; padding-left: 1px; }
.rb { grid-template-columns: 49px 33px 9px 15px 1fr; padding-left: 1px; }
.line { border-top: 1px solid #aaa; margin-top: 2px; height: 16px; }
.dims { height: 52px; padding-top: 3px; }
.rc { grid-template-columns: 55px 43px 14px 1fr; }
.checks { display: flex; align-items: center; height: 11px; gap: 11px; padding-left: 10px; }
.checks label, .ptabs label, .acts label { display: flex; align-items: center; gap: 2px; }
.ptabs { display: flex; align-items: center; height: 13px; gap: 6px; padding-left: 3px; }
.ptabs .on { background: #fff; }
.prm { height: 131px; padding: 2px 0 0 2px; border-color: #999 #ddd #ddd #999; }
.prm .r { height: 16px; }
.prm .low { height: 14px; }
.rd { grid-template-columns: 50px 45px 20px 1fr; }
.re { grid-template-columns: 32px 50px 9px 9px 1fr; column-gap: 2px; }
.rf { grid-template-columns: 40px 45px 18px 1fr; }
.rg { grid-template-columns: 40px 37px 8px 23px 36px; }
.rh { grid-template-columns: 24px 43px 9px 14px 36px; column-gap: 3px; }
.ri { grid-template-columns: 24px 60px 1fr; column-gap: 9px; }
.acts { display: grid; grid-template-columns: 38px 43px 60px; column-gap: 3px; align-items: center; height: 14px; }
.acts a { white-space: nowrap; }
.acts .focus { margin-left: 16px; }
.acts .focus + * { margin: 0; }
a { color: #0016e0; text-decoration: underline; }
.obs { height: 23px; padding-top: 3px; }
.rj { grid-template-columns: 48px 40px 11px 1fr; }
.res { grid-template-columns: 42px 34px 34px 40px; height: 20px; padding-left: 3px; }
.out { height: 75px; overflow: hidden; }
.out .r { height: 14px; }
.rk { grid-template-columns: 51px 47px 15px 1fr; padding-left: 1px; }
output { height: 12px; border-bottom: 1px solid #bbb; background: #f3f3f3; font: 6px/11px "Liberation Mono", monospace; text-align: center; }
output.ok { background: #8fee8f; }
.results { flex: 1; display: flex; flex-direction: column; padding: 28px 6px 12px 0; }
.empty { flex: 1; border: 1px solid #888; border-bottom-color: #ddd; margin-right: 3px; }
.calc { height: 109px; margin-top: 4px; padding: 9px 1px; text-align: right; background: #8fee8f; border-top: 1px solid #777; }
.status { display: flex; align-items: center; justify-content: flex-end; height: 14px; padding-right: 4px; background: #dcdcdc; }
.status .caret { margin: 0 8px 0 27px; }
.bulb { width: 10px; height: 10px; margin-right: 9px; }

.dialog { position: absolute; left: 302px; top: 21px; right: 66px; bottom: 19px; display: flex; flex-direction: column; background: #efefef; border-radius: 4px 4px 0 0; box-shadow: 0 0 0 1px #8c8c8c, 0 3px 12px 3px rgba(0, 0, 0, .4); }
.dlgbar { display: flex; align-items: center; height: 16px; padding: 0 8px 0 4px; gap: 4px; background: #eff3f8; border-radius: 4px 4px 0 0; border-bottom: 1px solid #aab4bd; }
.dlgbar h2 { flex: 1; }
.winbtns.dark { gap: 18px; }
.dlgbody { flex: 1; display: flex; min-height: 0; }
.params { width: 226px; flex: none; padding: 0 2px; border-right: 1px solid #aaa; }
.top { display: flex; align-items: flex-end; height: 14px; padding-left: 1px; gap: 7px; }
.top span { align-self: flex-start; margin-right: 74px; }
.top label, .has label, .foot label, .dd label, .dg label { display: flex; align-items: center; gap: 4px; }
fieldset { position: relative; border: 1px solid #dadada; min-width: 0; }
legend { position: absolute; left: 2px; top: -5px; padding: 0 1px; background: #efefef; }
.params .r { padding-left: 3px; }
.params .num, .params select { height: 13px; }
.g1 { height: 90px; margin-top: 1px; padding-top: 3px; }
.g1 .r { height: 16px; }
.g1 .da { height: 17px; }
.da { grid-template-columns: 42px 47px 62px 52px; }
.da label:nth-of-type(2) { padding-left: 24px; }
.db { grid-template-columns: 42px 51px 13px 45px 52px 14px; }
.db .mini { margin-left: 2px; }
.db label:nth-of-type(2) { padding-left: 6px; }
.dc { grid-template-columns: 42px 47px 16px 46px 52px; }
.dd { grid-template-columns: 44px 38px 30px 36px 14px 44px; }
.dd label:nth-of-type(2) { padding-left: 8px; }
.de { grid-template-columns: 20px 45px 29px 34px 37px 38px 14px; }
.de label:nth-of-type(2) { padding-left: 11px; }
.de label:nth-of-type(3) { padding-left: 7px; }
.g2 { height: 125px; margin-top: 7px; padding-top: 4px; }
.g2 .r { padding-left: 2px; }
.df { grid-template-columns: 45px 49px 13px 47px 51px 12px; }
.e1 { grid-template-columns: 45px 49px 10px 60px 41px 12px; }
.g3 { height: 22px; margin-top: 7px; padding-top: 3px; }
.g3 legend, .g4 legend { left: 3px; }
.dg { grid-template-columns: 42px 41px 10px 32px 38px 11px 40px; }
.g4 { height: 46px; padding-top: 6px; }
.g4 .r { height: 19px; }
.dh { grid-template-columns: 42px 41px 15px 31px 58px 16px; }
.g5 { height: 42px; margin-top: 8px; padding-top: 5px; }
.g5 .r, .dpane .r { height: 16px; }
.di { grid-template-columns: 47px 53px 9px 51px 42px 16px; }
.dtabs { display: flex; margin-top: 5px; height: 12px; }
.dtabs button { padding: 0 5px 0 3px; }
.dtabs .on { background: #fafafa; }
.dtabs button:last-child { padding-left: 10px; }
.dpane { background: #fafafa; padding: 1px 1px 4px; }
.dpane .r { padding-left: 1px; }
.dj { grid-template-columns: 57px 43px 12px 45px 46px 14px; }
.has { display: flex; justify-content: flex-end; align-items: center; height: 12px; margin: 1px 5px 2px; }
.g6 { height: 46px; padding-top: 5px; }
.g6 .r { height: 19px; padding-left: 2px; }
.dk { grid-template-columns: 48px 39px 10px 67px 41px 12px; }
.foot { display: grid; grid-template-columns: 35px 35px 44px 31px 31px; column-gap: 4px; padding: 3px 0 4px 13px; align-items: center; border-bottom: 1px solid #ddd; }
.foot label { padding-left: 5px; }
.foot .btn:last-child { margin-left: 9px; margin-right: -9px; }

.view { flex: 1; min-width: 0; display: flex; flex-direction: column; background: #f8f8f8; border-left: 3px solid #fff; }
.vtabs { display: flex; align-items: end; height: 13px; background: #efefef; }
.vtabs button { height: 12px; padding: 0 3px 0 2px; }
.vtabs .on { background: #fff; }
.cad { display: block; flex: 1; min-height: 0; margin: 2px 4px 0 3px; }
.dimtext { font: 7px "Liberation Sans", sans-serif; text-anchor: middle; }
.hint { padding: 2px 6px 8px; background: linear-gradient(#fff, #ebebeb); }
.log { display: block; width: 100%; height: 72px; resize: none; border-top: 1px solid #888; background: #fff; padding: 3px 1px; font: 8px/10px "Liberation Mono", "Noto Sans CJK SC", monospace; outline: 0; }
```
